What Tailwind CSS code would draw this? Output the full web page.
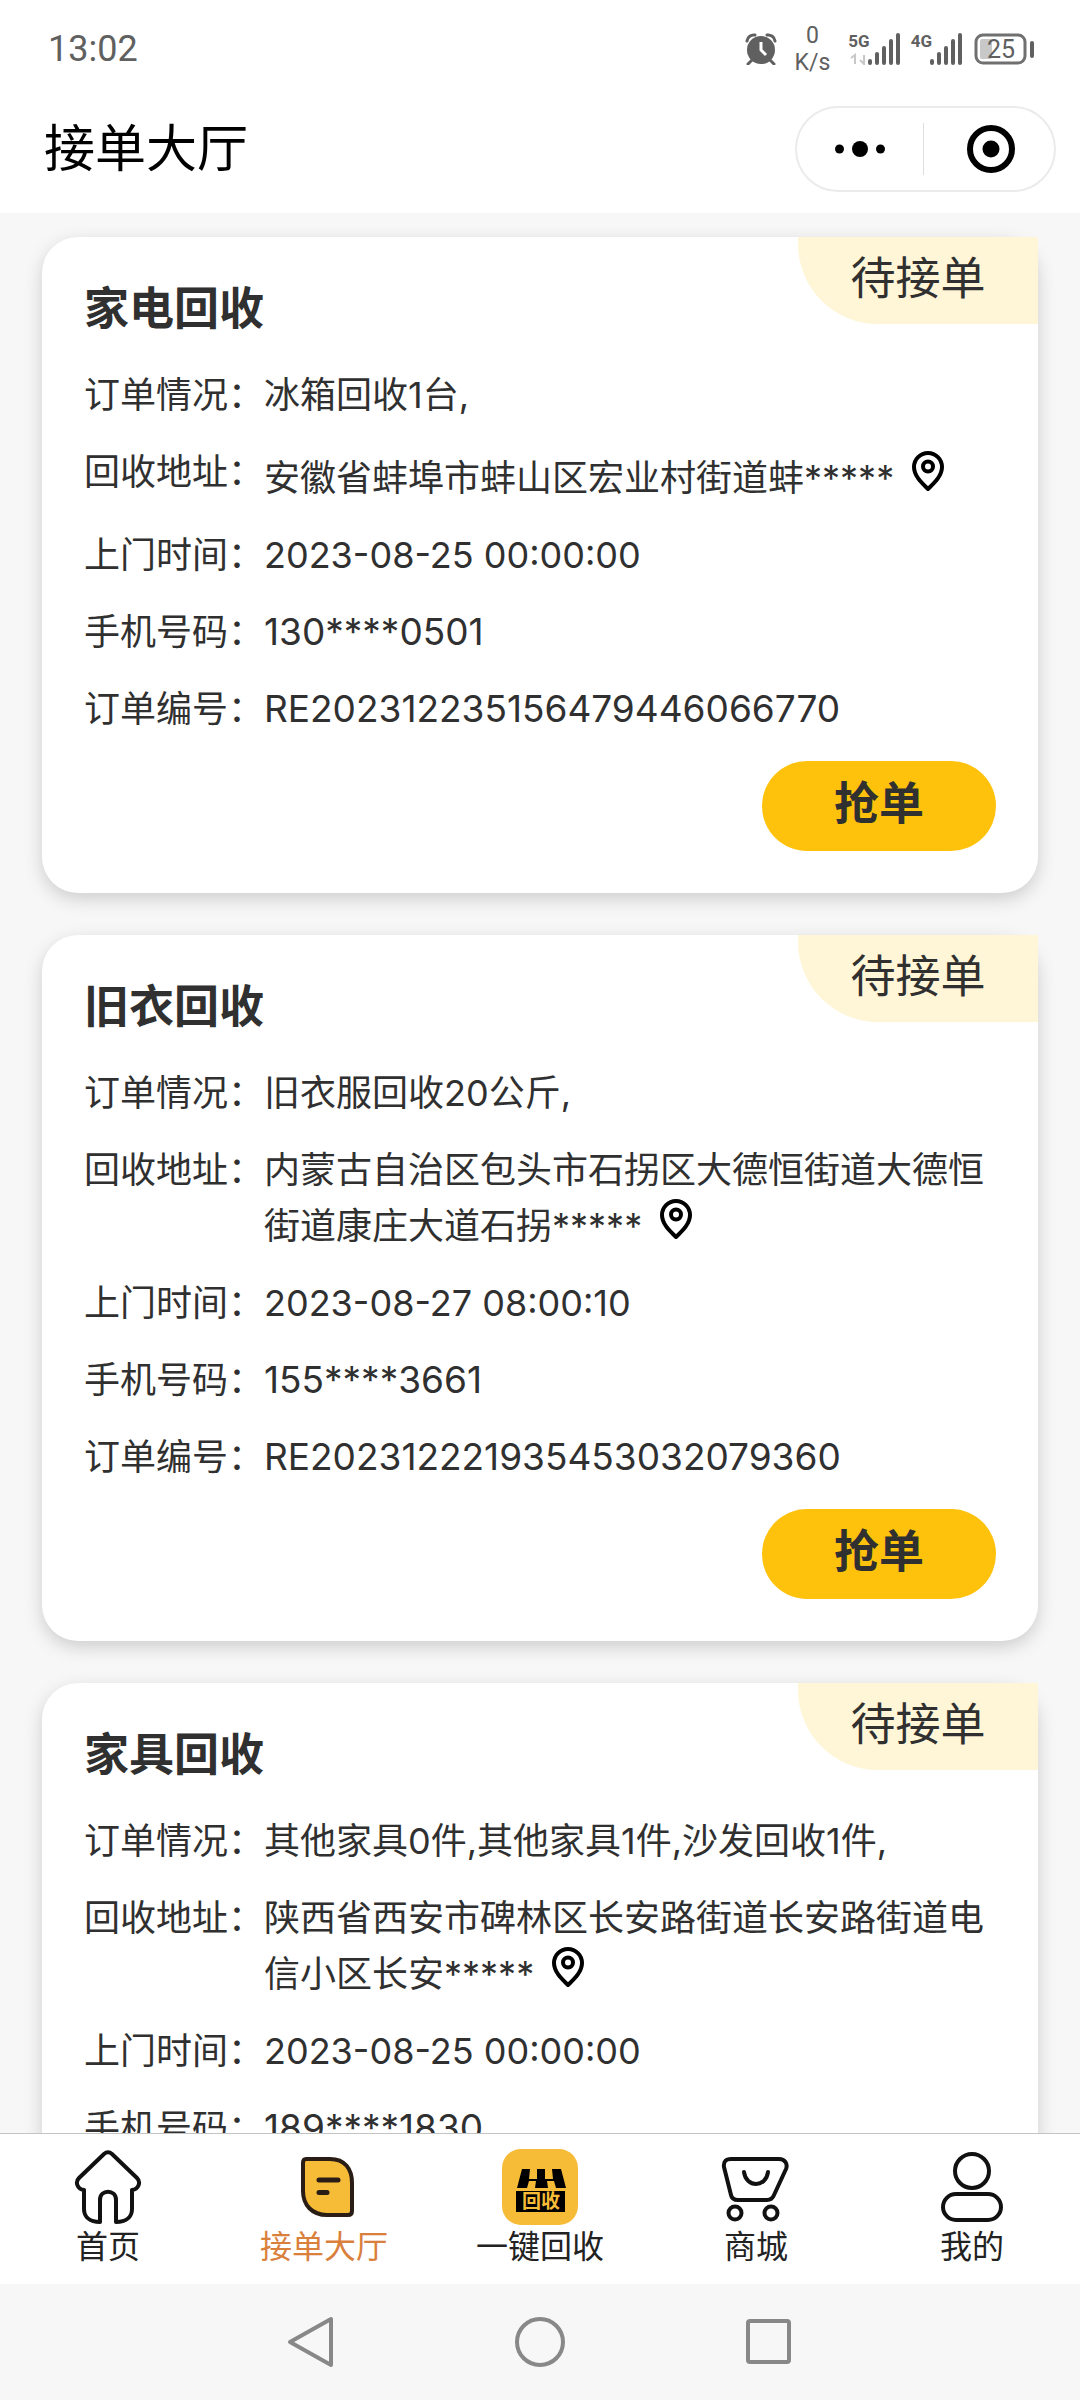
<!DOCTYPE html>
<html lang="zh-CN">
<head>
<meta charset="utf-8">
<meta name="viewport" content="width=device-width, initial-scale=1">
<title>接单大厅</title>
<script src="https://cdn.jsdelivr.net/npm/@tailwindcss/browser@4"></script>
</head>
<body class="flex h-screen flex-col overflow-hidden bg-[#f7f7f7] font-['Inter','Noto_Sans_CJK_SC',sans-serif] text-[36px] leading-[50px] text-[#303030]">
<svg class="hidden" aria-hidden="true">
  <symbol id="pin" viewBox="0 0 44 44">
    <path d="M22 42C17 37 8 29.500 8 20a14 14 0 0 1 28 0c0 9.500-9 17-14 22z" fill="none" stroke="#000" stroke-width="4" stroke-linejoin="round"/>
    <circle cx="22" cy="19.500" r="5" fill="none" stroke="#000" stroke-width="4"/>
  </symbol>
</svg>

<!-- Status bar -->
<div class="flex h-[98px] shrink-0 items-center justify-between bg-white pr-[46px] pl-12 text-[#606060]">
  <time class="font-['Roboto',sans-serif] text-[36px]">13:02</time>
  <div class="flex items-center">
    <svg class="size-8" viewBox="0 0 32 32" aria-label="闹钟"><circle cx="16" cy="17" r="14" fill="#606060"/><path d="M2 8a7 7 0 0 1 8-6M30 8a7 7 0 0 0-8-6M7 27l-4 4M25 27l4 4" fill="none" stroke="#606060" stroke-width="3" stroke-linecap="round"/><path d="M16 9v8l5 5" fill="none" stroke="#fff" stroke-width="3"/></svg>
    <div class="mx-[18px] text-center font-['Roboto',sans-serif] text-[23px] leading-[27px]">0<br>K/s</div>
    <div class="flex">
      <span class="-mr-5 font-['Roboto',sans-serif] text-[17px] leading-4 font-bold">5G</span>
      <svg class="h-8 w-[52px]" viewBox="0 0 52 32" aria-label="信号"><path d="M1 25l4-3v9M14 22v9l-4-4" fill="none" stroke="#c8c8c8" stroke-width="2"/><path d="M20 28v2M27 21v9M34 15v15M41 8v22M48 2v28" stroke="#606060" stroke-width="4" stroke-linecap="round"/></svg>
    </div>
    <div class="ml-[9px] flex">
      <span class="-mr-5 font-['Roboto',sans-serif] text-[17px] leading-4 font-bold">4G</span>
      <svg class="h-8 w-[52px]" viewBox="0 0 52 32" aria-label="信号"><path d="M20 28v2M27 21v9M34 15v15M41 8v22M48 2v28" stroke="#606060" stroke-width="4" stroke-linecap="round"/></svg>
    </div>
    <svg class="ml-[10px] h-8 w-[60px]" viewBox="0 0 60 32" aria-label="电量 25"><rect x="2" y="2" width="49" height="28" rx="7" fill="none" stroke="#707070" stroke-width="3"/><rect x="6" y="6" width="12" height="20" rx="2" fill="#c8c8c8"/><path d="M58 10v13" stroke="#606060" stroke-width="4" stroke-linecap="round"/><text x="27" y="25" text-anchor="middle" font-family="Roboto" font-size="25" fill="#606060">25</text></svg>
  </div>
</div>

<!-- Title bar -->
<header class="flex h-[115px] shrink-0 items-center justify-between bg-white pr-6 pb-[13px] pl-11">
  <h1 class="text-[51px] text-black">接单大厅</h1>
  <div class="flex h-[86px] w-[261px] items-center rounded-full border-2 border-[#ebebeb]">
    <button class="flex flex-1 items-center justify-center" aria-label="更多">
      <svg class="h-4 w-[52px]" viewBox="0 0 52 16"><circle cx="5.500" cy="8" r="4.500"/><circle cx="26" cy="8" r="8"/><circle cx="46.500" cy="8" r="4.500"/></svg>
    </button>
    <span class="h-[52px] w-px bg-[#dedede]"></span>
    <button class="flex flex-1 items-center justify-center pl-1" aria-label="关闭">
      <svg class="size-12" viewBox="0 0 48 48"><circle cx="24" cy="24" r="21" fill="none" stroke="#000" stroke-width="6"/><circle cx="24" cy="24" r="8.500"/></svg>
    </button>
  </div>
</header>

<!-- Order list -->
<main class="flex min-h-0 flex-1 flex-col gap-[42px] overflow-hidden px-[42px] pt-6">
  <article class="relative shrink-0 rounded-[36px] bg-white px-[42px] pt-10 pb-[42px] shadow-[0_6px_18px_rgba(0,0,0,0.17)]">
    <span class="absolute top-0 right-0 flex h-[87px] w-[240px] items-center justify-center rounded-bl-[80px] bg-[#fff5d7] pb-1 text-[45px]">待接单</span>
    <h2 class="mb-[29px] text-[45px] leading-[64px] font-bold">家电回收</h2>
    <dl class="grid grid-cols-[180px_1fr] gap-y-[27px]">
      <dt>订单情况：</dt><dd>冰箱回收1台,</dd>
      <dt>回收地址：</dt><dd>安徽省蚌埠市蚌山区宏业村街道蚌*****<svg class="ml-3 inline size-11 align-baseline" aria-label="位置"><use href="#pin"/></svg></dd>
      <dt>上门时间：</dt><dd>2023-08-25 00:00:00</dd>
      <dt>手机号码：</dt><dd class="text-[37px]">130****0501</dd>
      <dt>订单编号：</dt><dd class="text-[37px]">RE202312235156479446066770</dd>
    </dl>
    <button class="mt-[27px] ml-auto flex h-[90px] w-[234px] items-center justify-center rounded-full bg-[#ffc20c] pb-1 text-[45px] font-bold">抢单</button>
  </article>

  <article class="relative shrink-0 rounded-[36px] bg-white px-[42px] pt-10 pb-[42px] shadow-[0_6px_18px_rgba(0,0,0,0.17)]">
    <span class="absolute top-0 right-0 flex h-[87px] w-[240px] items-center justify-center rounded-bl-[80px] bg-[#fff5d7] pb-1 text-[45px]">待接单</span>
    <h2 class="mb-[29px] text-[45px] leading-[64px] font-bold">旧衣回收</h2>
    <dl class="grid grid-cols-[180px_1fr] gap-y-[27px]">
      <dt>订单情况：</dt><dd>旧衣服回收20公斤,</dd>
      <dt>回收地址：</dt><dd>内蒙古自治区包头市石拐区大德恒街道大德恒街道康庄大道石拐*****<svg class="ml-3 inline size-11 align-baseline" aria-label="位置"><use href="#pin"/></svg></dd>
      <dt>上门时间：</dt><dd>2023-08-27 08:00:10</dd>
      <dt>手机号码：</dt><dd class="text-[37px]">155****3661</dd>
      <dt>订单编号：</dt><dd class="text-[37px]">RE202312221935453032079360</dd>
    </dl>
    <button class="mt-[27px] ml-auto flex h-[90px] w-[234px] items-center justify-center rounded-full bg-[#ffc20c] pb-1 text-[45px] font-bold">抢单</button>
  </article>

  <article class="relative shrink-0 rounded-[36px] bg-white px-[42px] pt-10 pb-[42px] shadow-[0_6px_18px_rgba(0,0,0,0.17)]">
    <span class="absolute top-0 right-0 flex h-[87px] w-[240px] items-center justify-center rounded-bl-[80px] bg-[#fff5d7] pb-1 text-[45px]">待接单</span>
    <h2 class="mb-[29px] text-[45px] leading-[64px] font-bold">家具回收</h2>
    <dl class="grid grid-cols-[180px_1fr] gap-y-[27px]">
      <dt>订单情况：</dt><dd>其他家具0件,其他家具1件,沙发回收1件,</dd>
      <dt>回收地址：</dt><dd>陕西省西安市碑林区长安路街道长安路街道电信小区长安*****<svg class="ml-3 inline size-11 align-baseline" aria-label="位置"><use href="#pin"/></svg></dd>
      <dt>上门时间：</dt><dd>2023-08-25 00:00:00</dd>
      <dt>手机号码：</dt><dd class="text-[37px]">189****1830</dd>
    </dl>
  </article>
</main>

<!-- Tab bar -->
<nav class="relative grid h-[151px] shrink-0 grid-cols-5 border-t border-[#c4c4c4] bg-white pt-[15px] text-[32px] leading-[44px] text-[#222]">
  <a href="#" class="flex flex-col items-center">
    <svg class="size-[76px]" viewBox="0 0 76 76" fill="none" stroke="#111" stroke-width="4" stroke-linejoin="round"><path d="M34 5q4-3.500 8 0L67 29c4 4 2 11-5 12v19c0 8-6 13-16 13V51c0-11-16-11-16 0v22c-10 0-16-5-16-13V41c-7-1-9-8-5-12z"/></svg>
    首页
  </a>
  <a href="#" class="flex flex-col items-center text-[#d9803c]">
    <svg class="size-[76px]" viewBox="0 0 76 76"><path d="M20 10h24c15 0 22 10 22 24v28q0 4-4 4H41C26 66 17 56 17 42V14q0-4 3-4z" fill="#f6bc37" stroke="#2a1d15" stroke-width="4"/><path d="M33 31h19M33 43.500h8" stroke="#2a1d15" stroke-width="5" stroke-linecap="round"/></svg>
    接单大厅
  </a>
  <a href="#" class="flex flex-col items-center">
    <svg class="size-[76px]" viewBox="0 0 76 76"><rect width="76" height="76" rx="19" fill="#f6bc37"/><path d="M20 20h8l-1 10h8V20h8v10h8l-1-10h9l5 19H54l-2-7h-7l1 7H33l1-7h-7l-2 7H15z"/><path d="M14 42h49v21H14z"/><text x="39" y="59" text-anchor="middle" font-family="Noto Sans CJK SC" font-size="19" font-weight="700" fill="#f6bc37">回收</text></svg>
    一键回收
  </a>
  <a href="#" class="flex flex-col items-center">
    <svg class="size-[76px]" viewBox="0 0 76 76" fill="none" stroke="#111" stroke-width="4" stroke-linecap="round" stroke-linejoin="round"><path d="M13 10h48c6 0 9 5 7 10L56 46q-2 5-7 5H20q-6 0-7-5L6 18q-1-8 7-8z"/><path d="M26 23c2 16 22 16 24 0"/><circle cx="17" cy="64" r="6.500"/><circle cx="53" cy="64" r="6.500"/></svg>
    商城
  </a>
  <a href="#" class="flex flex-col items-center">
    <svg class="size-[76px]" viewBox="0 0 76 76" fill="none" stroke="#111" stroke-width="4"><circle cx="38" cy="22" r="17"/><rect x="9" y="45" width="58" height="26" rx="13"/></svg>
    我的
  </a>
</nav>

<!-- System navigation -->
<div class="flex h-[116px] shrink-0 items-center justify-center gap-[177px] bg-[#f7f7f7]">
  <button aria-label="返回"><svg class="size-[52px]" viewBox="0 0 52 52"><path d="M46 3v46L5 26z" fill="none" stroke="#888" stroke-width="4" stroke-linejoin="round"/></svg></button>
  <button aria-label="主屏幕"><svg class="size-[52px]" viewBox="0 0 52 52"><circle cx="26" cy="26" r="23" fill="none" stroke="#888" stroke-width="4"/></svg></button>
  <button aria-label="最近任务"><svg class="size-[52px]" viewBox="0 0 52 52"><rect x="5" y="5" width="41" height="41" rx="2" fill="none" stroke="#888" stroke-width="4"/></svg></button>
</div>
</body>
</html>
